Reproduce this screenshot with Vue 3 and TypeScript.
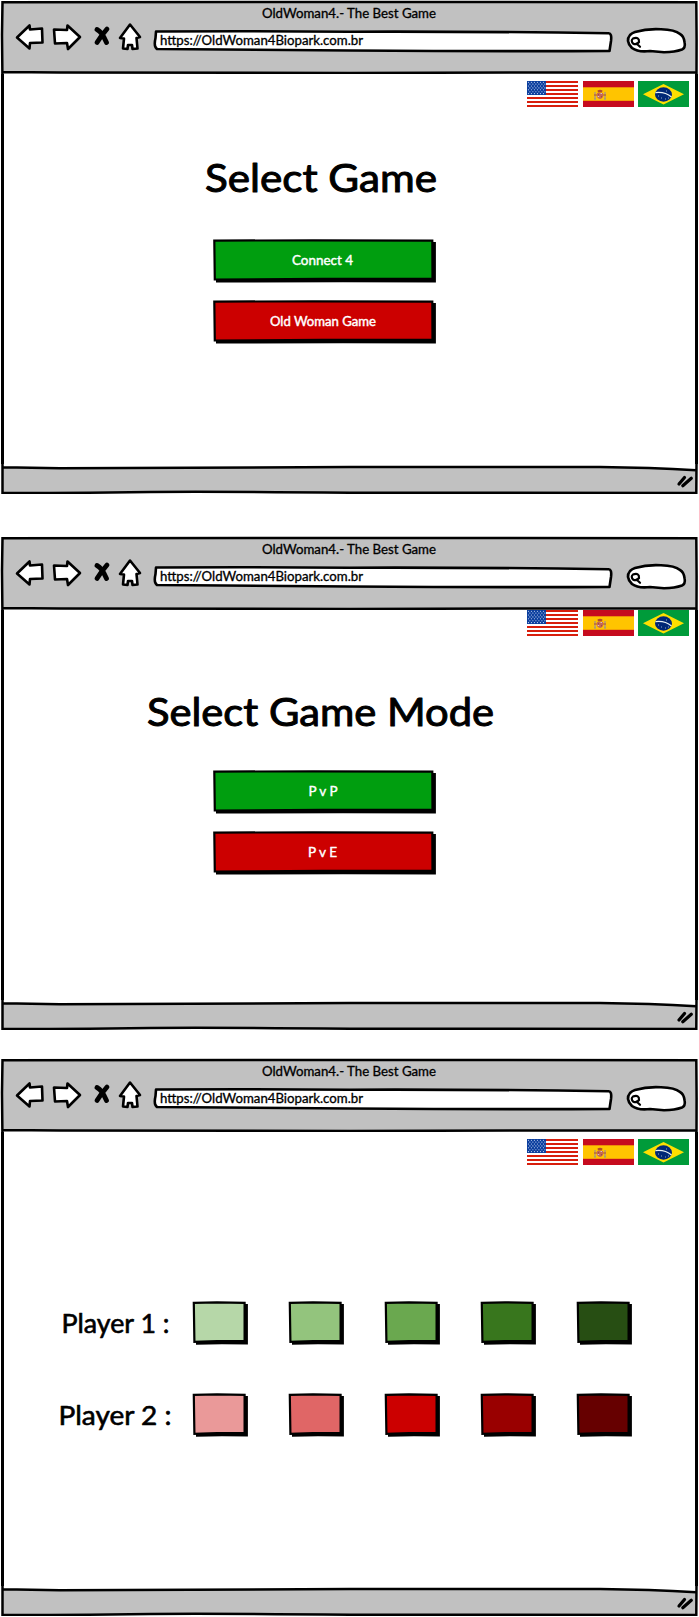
<script setup lang="ts">
interface Label { text: string; width: number; x: number }
interface Action { label: Label; color: string }
interface Heading { text: string; width: number; x: number; baseline: number }
interface Player { name: string; x: number; width: number; colors: string[] }
interface Screen {
  id: string
  flagsTop: number
  heading?: Heading
  actions: Action[]
  players: Player[]
}

const screens: Screen[] = [
  {
    id: 'game',
    flagsTop: 7,
    heading: { text: 'Select Game', width: 232, x: 205, baseline: 85 },
    actions: [
      { label: { text: 'Connect 4', width: 61, x: 79 }, color: '#009e0f' },
      { label: { text: 'Old Woman Game', width: 106, x: 57 }, color: '#cc0000' },
    ],
    players: [],
  },
  {
    id: 'mode',
    flagsTop: 0,
    heading: { text: 'Select Game Mode', width: 347, x: 147, baseline: 90 },
    actions: [
      { label: { text: 'P v P', width: 29, x: 95.5 }, color: '#009e0f' },
      { label: { text: 'P v E', width: 29, x: 95 }, color: '#cc0000' },
    ],
    players: [],
  },
  {
    id: 'colors',
    flagsTop: 7,
    actions: [],
    players: [
      { name: 'Player 1 :', x: 61.5, width: 108, colors: ['#b6d7a8', '#93c47d', '#6aa84f', '#38761d', '#274e13'] },
      { name: 'Player 2 :', x: 58.5, width: 113, colors: ['#ea9999', '#e06666', '#cc0000', '#990000', '#660000'] },
    ],
  },
]

const stars: number[][] = []
for (let r = 0; r < 7; r++) {
  for (let c = 0; c < 6; c++) stars.push([1.4 + c * 3 + (r % 2) * 1.5, 1.2 + r * 1.9])
}
const usStripes = [0, 4, 8, 12, 16, 20, 24]
</script>

<template>
  <main class="board">
    <section v-for="s in screens" :key="s.id" class="window" :class="s.id">
      <svg class="chrome" viewBox="0 0 699 74" width="699" height="74">
        <path class="bar" d="M2.5 72V2L350 1.7L696.5 2.2V72Z" />
        <path class="line" d="M2.4 74L2 35L2.5 2.2L350 1.9L696.3 2.2L696.6 40L696.5 74M2.5 72L60 72.5L350 72.9L520 72.6L696 72.2" />
        <text class="title" x="262" y="17.7" textLength="174" lengthAdjust="spacingAndGlyphs">OldWoman4.- The Best Game</text>
        <g class="icon">
          <path d="M17 37.5L29.5 25.5L30 29.5L42 28.5L42.5 42.5L30 43L29.5 48.5Z" />
          <path d="M54 29.5L67 30L67.5 25.500L80 37L68 49L67 43L55 43.500Z" />
          <path d="M130 24.500L140 37L136.500 38L137.500 48.500L132.500 49L132 45L128 45L127.500 49L123 48.500L124 38.500L120 38Z" />
          <path d="M156 31.500Q250 30.800 350 31.700Q480 31.300 608.500 33.200Q612 33 611 41L609.500 51Q500 51.500 350 50.500Q250 49.800 157 49Q153.500 47 155.500 38Z" />
          <path d="M635 32Q647 28.500 661 29.300Q675 29.800 680 34Q684 36 684.700 43Q685.500 48 682 49.500Q675 52 664 52.300L650 51Q638 52.500 632 48Q625 41 630 35Q632 33 635 32Z" />
        </g>
        <path class="cross" d="M97 29.500Q102 32 106.500 42.500M107 29Q101 36 97 42.500" />
        <path class="lens" d="M633 38.500Q639.500 36.500 639 42Q636.500 45.500 633 43.500Q630.500 40.500 633 38.500M636.500 43.500L640 46.800" />
        <text class="url" x="160" y="45.200" textLength="203" lengthAdjust="spacingAndGlyphs">https://OldWoman4Biopark.com.br</text>
      </svg>

      <div class="page">
        <div class="flags" :style="{ marginTop: s.flagsTop + 'px' }">
          <svg viewBox="0 0 51 26" width="51" height="26">
            <rect width="51" height="26" fill="#fff" />
            <rect v-for="y in usStripes" :key="y" :y="y" width="51" height="2" fill="#d81e0c" />
            <rect width="19" height="14" fill="#0b3e9e" />
            <circle v-for="(p, i) in stars" :key="i" :cx="p[0]" :cy="p[1]" r=".55" fill="#dce7fa" />
          </svg>
          <svg class="spain" viewBox="0 0 51 26" width="51" height="26">
            <rect width="51" height="26" fill="#c60b1e" />
            <rect y="6.300" width="51" height="13.500" fill="#ffc400" />
            <path d="M12 11V18M22 11V18" stroke="#b99a70" stroke-width="1.500" />
            <path d="M14 12H20V16Q17 20 14 16Z" fill="#c46a55" />
            <path d="M14.500 9.500Q17 8 19.500 9.500L19 11.500H15Z" fill="#b44b2a" />
            <path d="M11 14H14M20 14H23M15.500 13V14.500M18.500 15V16.500" stroke="#ad4a3a" />
            <path d="M17.500 12.500H19M14.700 15.500H16.200" stroke="#d9bfc9" />
            <path d="M11 18H13M21 18H23" stroke="#8a93a0" />
          </svg>
          <svg viewBox="0 0 51 26" width="51" height="26">
            <rect width="51" height="26" fill="#009b3a" />
            <path d="M5 13.200L25.500 3L46 13.200L25.500 23.500Z" fill="#fedf00" />
            <ellipse cx="25.500" cy="13.500" rx="8.500" ry="7.200" fill="#002776" />
            <path d="M17.500 11.600Q27 10.500 33.500 16" fill="none" stroke="#e8f2f5" stroke-width="1.200" />
            <path d="M20 15h1M23 17h1M27 18h1M30 17h1M28 10h1" stroke="#8eabc7" />
          </svg>
        </div>

        <svg v-if="s.heading" class="heading" viewBox="0 0 699 140" width="699" height="140">
          <text :x="s.heading.x" :y="s.heading.baseline" :textLength="s.heading.width" lengthAdjust="spacingAndGlyphs">{{ s.heading.text }}</text>
        </svg>

        <div v-if="s.actions.length" class="actions">
          <svg v-for="a in s.actions" :key="a.label.text" viewBox="0 0 224 44" width="224" height="44">
            <path d="M3 4L221 3H222.900V43.500L130 43.300L3 43.600Z" />
            <path class="face" d="M1.300 1.600L100 1.300L219.300 1.700L219.500 39.700L110 39.900L1.800 40.500Z" :fill="a.color" />
            <text class="action-label" :x="a.label.x" y="25.700" :textLength="a.label.width" lengthAdjust="spacingAndGlyphs">{{ a.label.text }}</text>
          </svg>
        </div>

        <div v-for="p in s.players" :key="p.name" class="player">
          <svg class="player-name" viewBox="0 0 192 44" width="192" height="44">
            <text :x="p.x" y="31.800" :textLength="p.width" lengthAdjust="spacingAndGlyphs">{{ p.name }}</text>
          </svg>
          <svg v-for="c in p.colors" :key="c" viewBox="0 0 56 44" width="56" height="44">
            <path d="M4 3H55.900V43.600L30 43.300L4 43.700Z" />
            <path class="face" d="M1.800 1.800L25 1.300L52.600 1.900V40.200L25 40L2.400 40.800Z" :fill="c" />
          </svg>
        </div>
      </div>

      <svg class="status" viewBox="0 0 699 30" width="699" height="30">
        <path class="bar" d="M2.500 3.300L350 3H600L696.500 6.200V28.500H2.500Z" />
        <path class="line" d="M2.500 0V28.700Q70 29.300 130 28.200T350 28.700L696.300 28.900L696.500 0M2.500 3.300L60 4.200Q200 3.300 350 3.100L600 3Q650 3.500 696 6.200" />
        <path class="grip" d="M679 20L684.500 13.500M682.800 21.700L691.300 14.300" />
      </svg>
    </section>
  </main>
</template>

<style scoped>
.board {
  display: flex;
  flex-direction: column;
  width: 699px;
  height: 1617px;
  overflow: hidden;
  background: #fff;
}

svg {
  display: block;
  flex: none;
}

.window {
  display: flex;
  flex-direction: column;
  flex: none;
  height: 494px;
}

.window.mode {
  margin-top: 42px;
}

.window.colors {
  height: 558px;
  margin-top: 28px;
}

.page {
  flex: 1;
  display: flex;
  flex-direction: column;
  box-sizing: border-box;
  border: solid #000;
  border-width: 0 3px;
  margin: 0 1px;
}

.bar {
  fill: #c1c1c1;
}

.line {
  fill: none;
  stroke: #000;
  stroke-width: 2.500;
}

.icon path {
  fill: #fff;
  stroke: #000;
  stroke-width: 2.600;
  stroke-linejoin: round;
}

.cross {
  fill: none;
  stroke: #000;
  stroke-width: 4.800;
  stroke-linecap: round;
}

.lens {
  fill: none;
  stroke: #000;
  stroke-width: 2.200;
  stroke-linecap: round;
}

.grip {
  stroke: #000;
  stroke-width: 3.200;
  stroke-linecap: round;
}

text {
  font-family: Lato, "Open Sans", sans-serif;
  fill: #000;
  stroke: #000;
  stroke-linejoin: round;
}

.title,
.url {
  font-size: 12.500px;
  stroke-width: 0.300;
}

.flags {
  display: flex;
  align-self: flex-end;
  flex: none;
  gap: 4px;
  margin-right: 6px;
}

.spain {
  margin-left: 1px;
}

.heading {
  margin-left: -4px;
}

.heading text {
  font-size: 39px;
  stroke-width: 1;
}

.actions {
  display: flex;
  flex-direction: column;
  gap: 17px;
  margin: -8px 0 0 209px;
}

.mode .actions {
  margin-top: -6px;
}

.face {
  stroke: #000;
  stroke-width: 2.200;
}

.action-label {
  font-size: 12.500px;
  fill: #fff;
  stroke: #fff;
  stroke-width: 0.400;
}

.player {
  display: flex;
  gap: 40px;
  margin: 136px 0 0 -4px;
}

.player + .player {
  margin-top: 48px;
}

.player-name {
  margin-right: -40px;
}

.player-name text {
  font-size: 26.500px;
  stroke-width: 0.600;
}
</style>
